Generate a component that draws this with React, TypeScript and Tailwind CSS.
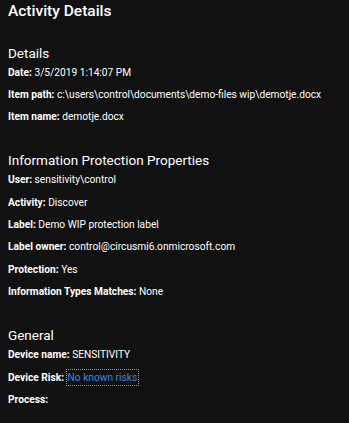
const sections = [
  {
    title: 'Details',
    rows: [
      { label: 'Date:', value: '3/5/2019 1:14:07 PM' },
      { label: 'Item path:', value: 'c:\\users\\control\\documents\\demo-files wip\\demotje.docx' },
      { label: 'Item name:', value: 'demotje.docx' },
    ],
  },
  {
    title: 'Information Protection Properties',
    rows: [
      { label: 'User:', value: 'sensitivity\\control' },
      { label: 'Activity:', value: 'Discover' },
      { label: 'Label:', value: 'Demo WIP protection label' },
      { label: 'Label owner:', value: 'control@circusmi6.onmicrosoft.com' },
      { label: 'Protection:', value: 'Yes' },
      { label: 'Information Types Matches:', value: 'None' },
    ],
  },
  {
    title: 'General',
    rows: [
      { label: 'Device name:', value: 'SENSITIVITY' },
      { label: 'Device Risk:', value: 'No known risks', link: true },
      { label: 'Process:', value: '' },
    ],
  },
];

export default function App() {
  return (
    <div className="h-[423px] w-[349px] overflow-hidden bg-[#111111] pl-2 text-white font-['Roboto',sans-serif]">
      <h1 className="pt-[1px] text-[15.5px] leading-[20px] font-medium">Activity Details</h1>
      {sections.map((s) => (
        <section key={s.title} className="mt-[22.5px]">
          <h2 className="text-[13.5px] leading-[18px] font-normal">{s.title}</h2>
          <div className="text-[10.2px]">
            {s.rows.map((r) => (
              <div key={r.label} className="leading-[22.4px] whitespace-nowrap">
                <span className="font-bold">{r.label}</span>{' '}
                {r.link ? (
                  <span className="px-px py-[2px] text-[#3a86e0] outline-1 outline-dotted outline-[#9a9a9a]">{r.value}</span>
                ) : (
                  r.value
                )}
              </div>
            ))}
          </div>
        </section>
      ))}
    </div>
  );
}
